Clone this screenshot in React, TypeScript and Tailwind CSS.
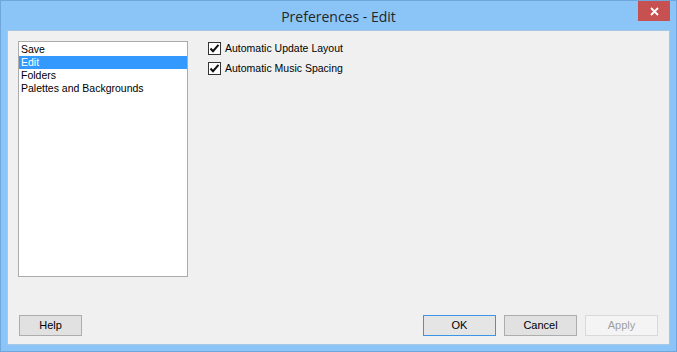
import React from 'react';

const ITEMS = ['Save', 'Edit', 'Folders', 'Palettes and Backgrounds'];
const OPTIONS = ['Automatic Update Layout', 'Automatic Music Spacing'];

const Check: React.FC<{ label: string }> = ({ label }) => (
  <div className="flex items-center h-[13px]">
    <div className="w-[13px] h-[13px] border border-[#333333] bg-white flex items-center justify-center">
      <svg width="11" height="11" viewBox="0 0 11 11">
        <path d="M1.5 5.5 L4 8.2 L9.5 1.8" fill="none" stroke="#111" strokeWidth="2" />
      </svg>
    </div>
    <span className="ml-[4px] text-[10.5px] leading-[13px] text-black">{label}</span>
  </div>
);

const Btn: React.FC<{ label: string; variant?: 'default' | 'focus' | 'disabled' }> = ({ label, variant = 'default' }) => {
  const cls =
    variant === 'focus'
      ? 'border-[#3c94e6] bg-[#e5e5e5] text-black'
      : variant === 'disabled'
      ? 'border-[#d9d9d9] bg-[#f4f4f4] text-[#a0a0a0]'
      : 'border-[#adadad] bg-[#e1e1e1] text-black';
  return (
    <div className={`w-[73px] h-[21px] border flex items-center justify-center text-[11px] ${cls}`}>
      {label}
    </div>
  );
};

const App: React.FC = () => {
  return (
    <div
      className="w-[677px] h-[352px] bg-[#8bc5f8] border border-[#6fa6dc] flex flex-col relative overflow-hidden"
      style={{ fontFamily: '"Liberation Sans", Arial, sans-serif' }}
    >
      <div className="h-[29px] flex items-center justify-center">
        <span className="text-[14px] text-[#262626] mt-[1px]" style={{ fontFamily: '"Open Sans", sans-serif' }}>
          Preferences - Edit
        </span>
      </div>
      <div className="absolute right-[6px] top-0 w-[32px] h-[20px] bg-[#c75050] flex items-center justify-center">
        <svg width="9" height="9" viewBox="0 0 9 9">
          <path d="M1 1 L8 8 M8 1 L1 8" stroke="white" strokeWidth="1.8" />
        </svg>
      </div>

      <div className="flex-1 mx-[6px] mb-[6px] border border-[#a9c6e3] bg-[#f0f0f0] flex flex-col">
        <div className="flex flex-1 pt-[10px]">
          <div className="ml-[10px] w-[170px] h-[236px] border border-[#ababab] bg-white pt-[1px]">
            {ITEMS.map((it) => (
              <div
                key={it}
                className={`h-[13px] leading-[13px] pl-[2px] text-[10.5px] ${it === 'Edit' ? 'bg-[#3399ff] text-white' : 'text-black'}`}
              >
                {it}
              </div>
            ))}
          </div>
          <div className="ml-[20px] pt-[1px] flex flex-col gap-[7px]">
            {OPTIONS.map((o) => (
              <Check key={o} label={o} />
            ))}
          </div>
        </div>
        <div className="flex items-center h-[21px] mb-[8px]">
          <div className="ml-[11px] w-[63px] h-[21px] border border-[#adadad] bg-[#e1e1e1] flex items-center justify-center text-[11px] text-black">
            Help
          </div>
          <div className="flex-1" />
          <div className="flex gap-[8px] mr-[11px]">
            <Btn label="OK" variant="focus" />
            <Btn label="Cancel" />
            <Btn label="Apply" variant="disabled" />
          </div>
        </div>
      </div>
    </div>
  );
};

export default App;
